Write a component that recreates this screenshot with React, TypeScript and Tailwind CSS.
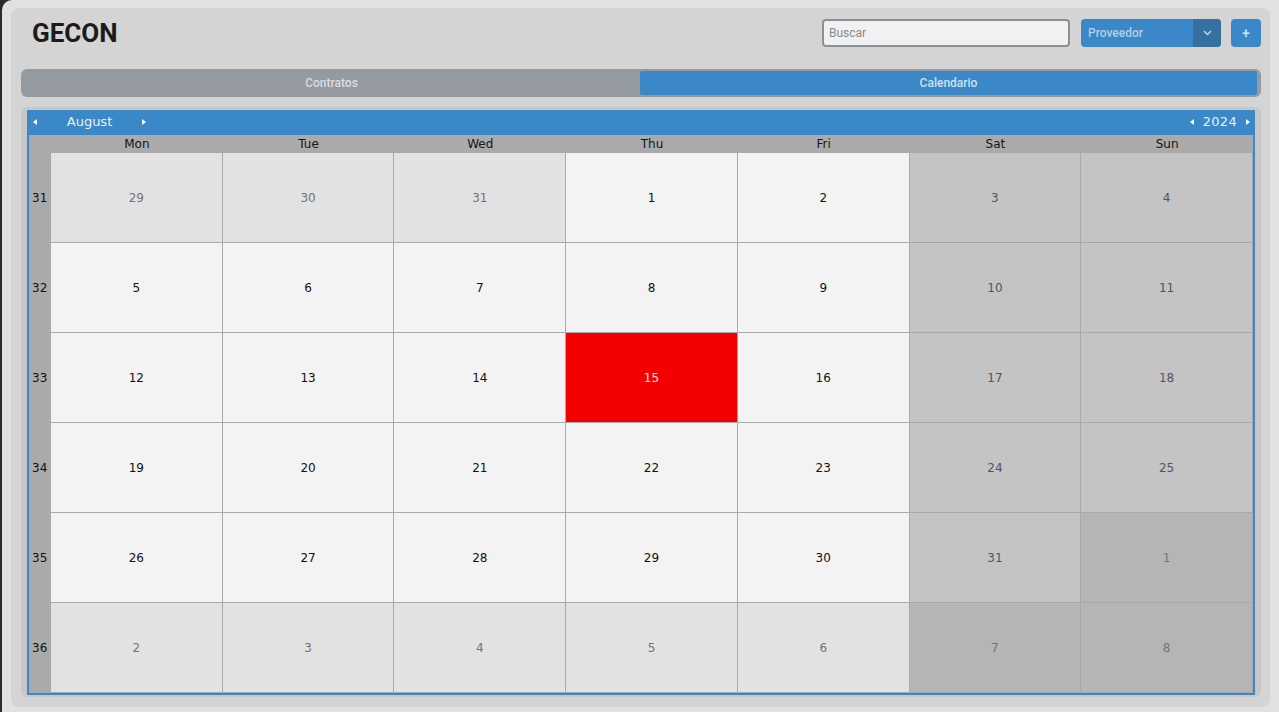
import React from 'react';

const dayNames = ['Mon', 'Tue', 'Wed', 'Thu', 'Fri', 'Sat', 'Sun'];

type Day = { n: number; inMonth: boolean; weekend: boolean; today: boolean };

const buildWeeks = () => {
    // calendar starts on Monday, 29 July 2024
    const start = new Date(2024, 6, 29);
    const weeks: { num: number; days: Day[] }[] = [];
    for (let w = 0; w < 6; w++) {
        const days: Day[] = [];
        for (let d = 0; d < 7; d++) {
            const date = new Date(start);
            date.setDate(start.getDate() + w * 7 + d);
            days.push({
                n: date.getDate(),
                inMonth: date.getMonth() === 7,
                weekend: d >= 5,
                today: date.getMonth() === 7 && date.getDate() === 15,
            });
        }
        weeks.push({ num: 31 + w, days });
    }
    return weeks;
};

const Arrow = ({ dir }: { dir: 'left' | 'right' }) => (
    <svg width="4" height="6" viewBox="0 0 4 6" className="shrink-0">
        {dir === 'left' ? <polygon points="4,0 4,6 0,3" fill="#ffffff" /> : <polygon points="0,0 0,6 4,3" fill="#ffffff" />}
    </svg>
);

const cellClass = (day: Day) => {
    if (day.today) return 'bg-[#f50000] text-[#ffe6e6]';
    if (day.weekend) return day.inMonth ? 'bg-[#c4c4c4] text-[#4d5661]' : 'bg-[#b5b5b5] text-[#6c7580]';
    return day.inMonth ? 'bg-[#f3f3f3] text-[#111111]' : 'bg-[#e2e2e2] text-[#737373]';
};

export default function App() {
    const weeks = buildWeeks();

    return (
        <div className="h-[712px] w-full overflow-hidden bg-[#2b2b2b]">
            <div className="ml-[2px] h-full rounded-tl-[10px] bg-[#e1e1e1] pl-[9px] pr-[9px] pt-[8px]" style={{ fontFamily: 'Roboto, "Liberation Sans", sans-serif' }}>
                <div className="flex h-[699px] flex-col rounded-[8px] bg-[#d4d4d4] pb-[10px] pl-[10px] pr-[9px] pt-[11px]">
                    {/* top bar */}
                    <div className="flex h-[28px] items-center">
                        <h1 className="pl-[11px] text-[26px] font-bold leading-none text-[#1b1b1b]">GECON</h1>
                        <input
                            placeholder="Buscar"
                            className="ml-auto h-[28px] w-[248px] rounded-[4px] border-2 border-[#8b9097] bg-[#f1f1f1] px-[5px] text-[12px] text-[#333] placeholder:text-[#8a8a8a] outline-none"
                        />
                        <div className="ml-[11px] flex h-[28px] w-[140px] overflow-hidden rounded-[4px] bg-[#3a88c8]">
                            <span className="flex-1 pl-[7px] text-[12px] font-medium leading-[28px] text-[#b7cde2]">Proveedor</span>
                            <span className="flex w-[28px] items-center justify-center bg-[#3670a0]">
                                <svg width="9" height="6" viewBox="0 0 9 6" fill="none">
                                    <path d="M1 1l3.5 3.5L8 1" stroke="#c7d6e4" strokeWidth="1.5" />
                                </svg>
                            </span>
                        </div>
                        <button className="ml-[10px] flex h-[28px] w-[30px] items-center justify-center rounded-[4px] bg-[#3a88c8] text-[14px] font-medium leading-none text-[#d5e4f2]">+</button>
                    </div>

                    {/* tabs */}
                    <div className="mt-[22px] grid h-[28px] grid-cols-2 rounded-[6px] bg-[#959aa1] p-[2px] pr-[4px] text-[12px] font-medium">
                        <div className="flex items-center justify-center text-[#dadde1]">Contratos</div>
                        <div className="flex items-center justify-center rounded-[2px] bg-[#3a88c8] text-[#cfe0f1]">Calendario</div>
                    </div>

                    {/* calendar */}
                    <div className="mt-[10px] h-[590px] rounded-[6px] bg-[#c8c8c8] px-[6px] pt-[3px]">
                        <div className="flex h-[585px] flex-col border-2 border-[#3a88c8]" style={{ fontFamily: '"DejaVu Sans", Verdana, sans-serif' }}>
                            <div className="flex h-[23px] items-center bg-[#3a88c8] pb-[4px] text-[13px] text-[#e8f0f8]">
                                <div className="flex items-center pl-[4px]">
                                    <Arrow dir="left" />
                                    <span className="w-[105px] text-center">August</span>
                                    <Arrow dir="right" />
                                </div>
                                <div className="ml-auto flex items-center gap-[9px] pr-[3px]">
                                    <Arrow dir="left" />
                                    <span className="tracking-[0.3px]">2024</span>
                                    <Arrow dir="right" />
                                </div>
                            </div>
                            <div className="grid flex-1 grid-cols-[22px_repeat(7,minmax(0,1fr))] grid-rows-[18px_repeat(6,90px)] text-[12px]">
                                <div className="bg-[#aaaaaa]" />
                                {dayNames.map(name => (
                                    <div key={name} className="flex items-center justify-center bg-[#aaaaaa] text-[#151515]">{name}</div>
                                ))}
                                {weeks.map(week => (
                                    <React.Fragment key={week.num}>
                                        <div className="flex items-center bg-[#aaaaaa] pl-[3px] text-[#111]">{week.num}</div>
                                        {week.days.map((day, di) => (
                                            <div
                                                key={di}
                                                className={`flex items-center justify-center border-b border-r border-[#a9a9a9] ${cellClass(day)}`}
                                            >
                                                {day.n}
                                            </div>
                                        ))}
                                    </React.Fragment>
                                ))}
                            </div>
                        </div>
                    </div>
                </div>
            </div>
        </div>
    );
}
